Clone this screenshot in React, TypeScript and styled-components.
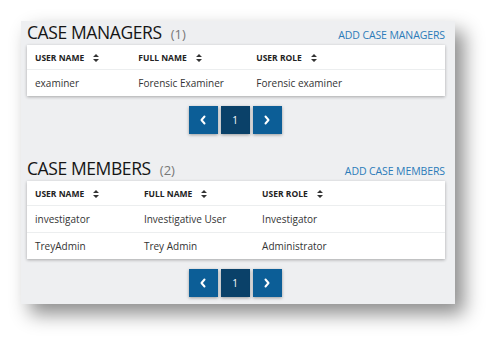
import React from "react";
import styled, { createGlobalStyle } from "styled-components";

const GlobalStyle = createGlobalStyle`
  html, body {
    margin: 0;
    padding: 0;
    background: #ffffff;
    font-family: "Open Sans", "Noto Sans", sans-serif;
  }
`;

const Page = styled.div`
  width: 497px;
  height: 347px;
  padding: 21px 0 0 21px;
  box-sizing: border-box;
`;

const Panel = styled.div`
  width: 434px;
  height: 283px;
  background: #eeeff1;
  box-sizing: border-box;
  padding: 0 10px 0 6px;
  box-shadow: 9px 10px 18px rgba(0, 0, 0, 0.45);
`;

const Section = styled.section<{ $gap: number }>`
  margin-top: ${(p) => p.$gap}px;
`;

const HeadRow = styled.div`
  display: flex;
  align-items: baseline;
  justify-content: space-between;
  height: 24px;
`;

const Title = styled.h2`
  margin: 0;
  font-size: 17.5px;
  font-weight: 500;
  color: #151515;
  letter-spacing: -0.4px;
  line-height: 22px;
`;

const Count = styled.span`
  font-size: 13px;
  font-weight: 400;
  color: #777;
  margin-left: 9px;
  letter-spacing: 0;
`;

const AddLink = styled.a`
  font-size: 10.5px;
  color: #2b7bb9;
  text-decoration: none;
  letter-spacing: -0.1px;
`;

const Card = styled.div`
  background: #fff;
  box-shadow: 0 1px 3px rgba(0, 0, 0, 0.3);
`;

const Table = styled.table`
  width: 100%;
  border-collapse: collapse;
  font-size: 10px;
  color: #333;
`;

const Th = styled.th<{ $w: number }>`
  width: ${(p) => p.$w}px;
  text-align: left;
  font-size: 8.5px;
  font-weight: 700;
  color: #222;
  height: 24px;
  padding: 0 0 0 8px;
  border-bottom: 1px solid #eceeef;
`;

const Td = styled.td`
  height: 26px;
  padding: 0 0 0 8px;
  border-bottom: 1px solid #eceeef;

  tr:last-child & {
    border-bottom: none;
  }
`;

const SortMark = styled.span`
  display: inline-block;
  margin-left: 9px;
  vertical-align: middle;
  line-height: 0;
`;

const Pager = styled.div`
  display: flex;
  justify-content: center;
  gap: 3px;
  margin-top: 10px;
  padding-right: 2px;
`;

const PageBtn = styled.button<{ $active?: boolean }>`
  width: 29px;
  height: 28px;
  border: none;
  padding: 0;
  display: flex;
  align-items: center;
  justify-content: center;
  background: ${(p) => (p.$active ? "#0a4169" : "#0c5e97")};
  color: #fff;
  font-family: inherit;
  font-size: 10px;
  box-shadow: 0 1px 3px rgba(0, 0, 0, 0.35);
`;

const Sort = () => (
  <SortMark>
    <svg width="6" height="8" viewBox="0 0 6 8">
      <path d="M3 0 L6 3 H0 Z M3 8 L6 5 H0 Z" fill="#333" />
    </svg>
  </SortMark>
);

const Chevron = ({ dir }: { dir: "left" | "right" }) => (
  <svg width="8" height="10" viewBox="0 0 8 10">
    <path
      d={dir === "left" ? "M5.5 1.5 L2.5 5 L5.5 8.5" : "M2.5 1.5 L5.5 5 L2.5 8.5"}
      stroke="#fff"
      strokeWidth="2"
      fill="none"
      strokeLinecap="round"
      strokeLinejoin="round"
    />
  </svg>
);

interface Member {
  user: string;
  full: string;
  role: string;
}

const managers: Member[] = [
  { user: "examiner", full: "Forensic Examiner", role: "Forensic examiner" },
];

const members: Member[] = [
  { user: "investigator", full: "Investigative User", role: "Investigator" },
  { user: "TreyAdmin", full: "Trey Admin", role: "Administrator" },
];

const UserSection = ({
  title,
  link,
  rows,
  cols,
  gap,
}: {
  title: string;
  link: string;
  rows: Member[];
  cols: number[];
  gap: number;
}) => (
  <Section $gap={gap}>
    <HeadRow>
      <Title>
        {title}
        <Count>({rows.length})</Count>
      </Title>
      <AddLink href="#">{link}</AddLink>
    </HeadRow>
    <Card>
      <Table>
        <thead>
          <tr>
            <Th $w={cols[0]}>
              USER NAME
              <Sort />
            </Th>
            <Th $w={cols[1]}>
              FULL NAME
              <Sort />
            </Th>
            <Th $w={cols[2]}>
              USER ROLE
              <Sort />
            </Th>
          </tr>
        </thead>
        <tbody>
          {rows.map((r) => (
            <tr key={r.user}>
              <Td>{r.user}</Td>
              <Td>{r.full}</Td>
              <Td>{r.role}</Td>
            </tr>
          ))}
        </tbody>
      </Table>
    </Card>
    <Pager>
      <PageBtn>
        <Chevron dir="left" />
      </PageBtn>
      <PageBtn $active>1</PageBtn>
      <PageBtn>
        <Chevron dir="right" />
      </PageBtn>
    </Pager>
  </Section>
);

export default function App() {
  return (
    <>
      <GlobalStyle />
      <Page>
        <Panel>
          <UserSection
            title="CASE MANAGERS"
            link="ADD CASE MANAGERS"
            rows={managers}
            cols={[100, 116, 202]}
            gap={0}
          />
          <UserSection
            title="CASE MEMBERS"
            link="ADD CASE MEMBERS"
            rows={members}
            cols={[106, 116, 196]}
            gap={23}
          />
        </Panel>
      </Page>
    </>
  );
}
